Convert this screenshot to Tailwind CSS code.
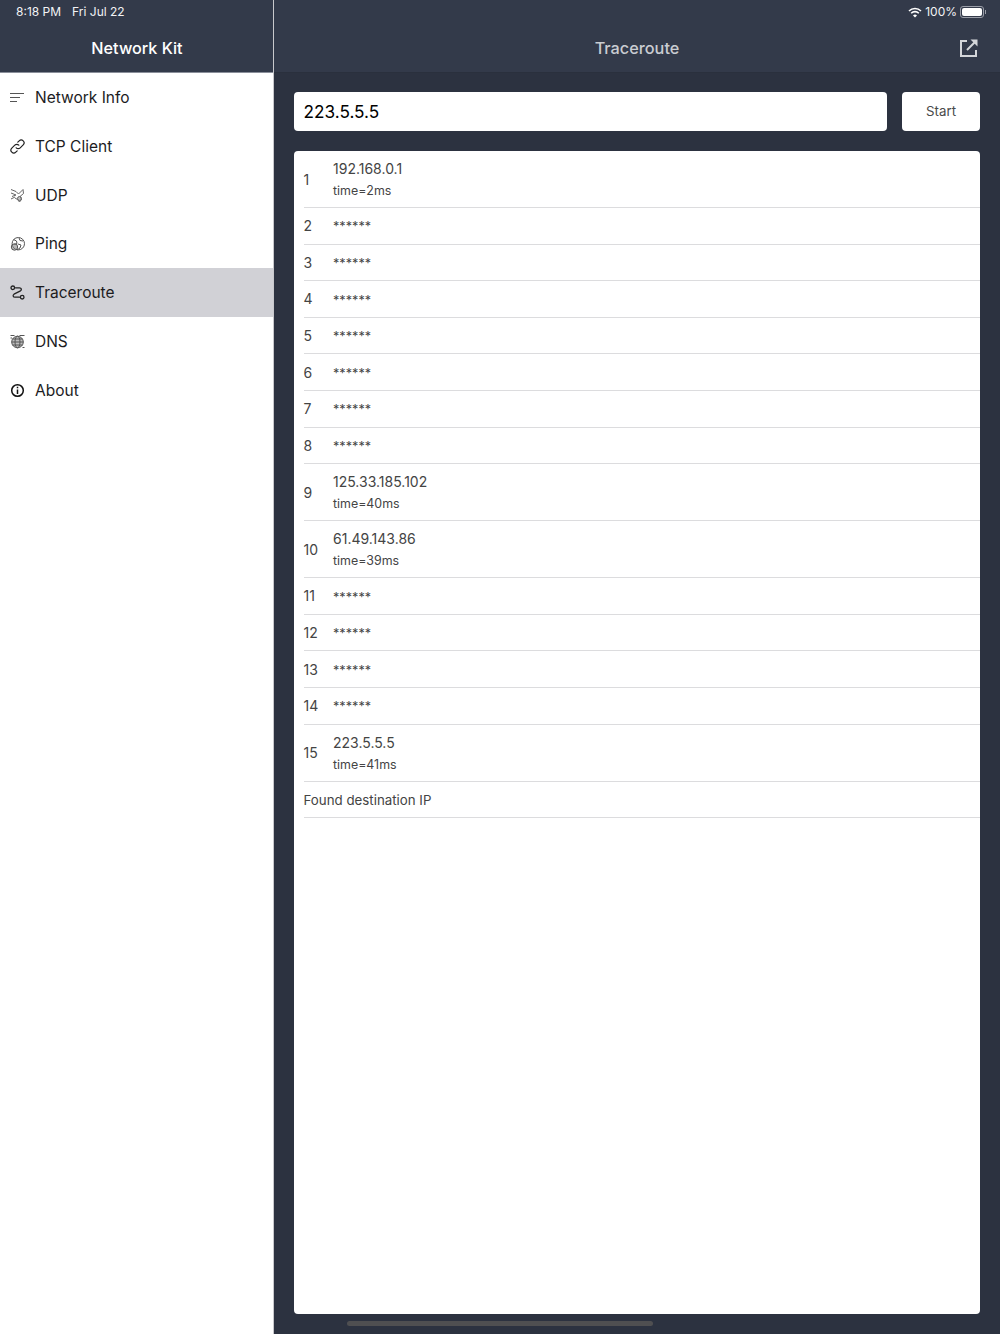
<!DOCTYPE html>
<html lang="en">
<head>
  <meta charset="UTF-8" />
  <title>Network Kit</title>
  <script src="https://cdn.jsdelivr.net/npm/@tailwindcss/browser@4"></script>
</head>
<body class="bg-[#2c3240] font-['Inter',sans-serif] text-[#3c3c3c]">
  <div class="flex h-[1334px] w-[1000px] overflow-hidden relative">

    <!-- Sidebar -->
    <aside class="w-[274px] shrink-0 bg-white border-r border-[#c8c8cc] flex flex-col">
      <header class="h-[73px] bg-[#333a4a] border-b border-[#8a8f9a] flex flex-col text-white">
        <div class="h-6 pl-4 flex items-center gap-[11px] text-[12px] leading-none text-[#f2f3f5]">
          <span>8:18 PM</span><span>Fri Jul 22</span>
        </div>
        <h1 class="mt-[6px] pl-px text-center text-[16.2px] leading-[36px] font-medium">Network Kit</h1>
      </header>
      <nav class="flex flex-col text-[#1c1c1e] text-[15.5px]">
        <a class="h-[49px] flex items-center gap-[10px] pl-[10px]">
          <svg class="w-[15px] h-[15px]" viewBox="0 0 15 15" fill="none" stroke="#555" stroke-width="1"><path d="M0 3.5h14M0 7.5h10M0 11.5h7"/></svg>
          <span>Network Info</span>
        </a>
        <a class="h-[49px] flex items-center gap-[10px] pl-[10px]">
          <svg class="w-[15px] h-[15px]" viewBox="0 0 15 15" fill="none" stroke="#222" stroke-width="1.2" stroke-linecap="round" stroke-linejoin="round"><path d="M6.2 8.8a2.8 2.8 0 0 0 4 0l3-3a2.8 2.8 0 0 0-4-4L7.8 3.2"/><path d="M8.8 6.2a2.8 2.8 0 0 0-4 0l-3 3a2.8 2.8 0 0 0 4 4l1.4-1.4"/></svg>
          <span>TCP Client</span>
        </a>
        <a class="h-[49px] flex items-center gap-[10px] pl-[10px]">
          <svg class="w-[15px] h-[15px]" viewBox="0 0 15 15" fill="none" stroke="#666" stroke-width="1"><path d="M1 1.5l5 2 2.5 2.5L13 1.5l.5 4L10 8.5l1.5 3-2 2.5-2-2.5L5 10"/><path d="M1 5l5 2M2 8.5l4-1.5M1 11l4-2"/><circle cx="9.500" cy="10.500" r="2" fill="#999" fill-opacity=".6"/></svg>
          <span>UDP</span>
        </a>
        <a class="h-[48px] flex items-center gap-[10px] pl-[10px]">
          <svg class="w-[15px] h-[15px]" viewBox="0 0 15 15" fill="none" stroke="#555" stroke-width="1"><circle cx="8.300" cy="6.700" r="6.200"/><path d="M3.500 2.500l3 1.500 .5 2.500-3 1M9 1l1 2.500 3 .5M8 7l3 1-1 3-3 2"/><circle cx="4.500" cy="10" r="3.200" fill="#888" fill-opacity=".6"/></svg>
          <span>Ping</span>
        </a>
        <a class="h-[49px] flex items-center gap-[10px] pl-[10px] bg-[#d1d1d6]">
          <svg class="w-[15px] h-[15px]" viewBox="0 0 15 15" fill="none" stroke="#222" stroke-width="1.300" stroke-linecap="round" stroke-linejoin="round"><circle cx="2.800" cy="2.800" r="1.800"/><circle cx="12.200" cy="12.200" r="1.800"/><path d="M5.500 2.800h4c2 0 2.500 2 1 3L4 9.200c-1.500 1-1 3 1 3h4.500"/></svg>
          <span>Traceroute</span>
        </a>
        <a class="h-[49px] flex items-center gap-[10px] pl-[10px]">
          <svg class="w-[15px] h-[15px]" viewBox="0 0 15 15" fill="none" stroke="#555" stroke-width="1"><circle cx="7.500" cy="8" r="5.800" fill="#888" fill-opacity=".55"/><ellipse cx="7.500" cy="8" rx="2.500" ry="5.800"/><path d="M1.700 8h11.600M2.500 5h10M2.500 11h10M.5 1.500h4M9.500 1.500h5M.5 4h1.500M12.500 13.500h2"/></svg>
          <span>DNS</span>
        </a>
        <a class="h-[49px] flex items-center gap-[10px] pl-[10px]">
          <svg class="w-[15px] h-[15px]" viewBox="0 0 15 15" fill="none" stroke="#111" stroke-width="1.500"><circle cx="7.500" cy="7.500" r="5.800"/><path d="M7.500 6.500v4.500M7.500 3.800v1.400"/></svg>
          <span>About</span>
        </a>
      </nav>
    </aside>

    <!-- Main -->
    <main class="flex-1 min-w-0 flex flex-col">
      <header class="h-[73px] bg-[#333a4a] border-b border-[#2a303d] flex flex-col">
        <div class="h-6 flex items-center justify-end pr-[14px] gap-[3px] text-[12px] leading-none text-[#f2f3f5]">
          <svg class="w-[14px] h-[11px]" viewBox="0 0 14 11" fill="none" stroke="#fff" stroke-width="1.600"><path d="M1 4a8.500 8.500 0 0 1 12 0M3.200 6.200a5.400 5.400 0 0 1 7.600 0"/><path d="M7 10.500L5 8.400a2.800 2.800 0 0 1 4 0z" fill="#fff" stroke="none"/></svg>
          <span>100%</span>
          <span class="flex items-center gap-px">
            <span class="w-[24px] h-[12px] rounded-[3px] border border-[#9a9ea8] p-px flex"><span class="flex-1 bg-white rounded-[2px]"></span></span>
            <span class="w-px h-1 bg-[#9a9ea8]"></span>
          </span>
        </div>
        <div class="relative mt-[6px] h-9 flex items-center justify-center">
          <h2 class="text-[16.300px] font-medium text-[#c9ccd2]">Traceroute</h2>
          <svg class="absolute right-[21px] top-[8px] w-[20px] h-[20px]" viewBox="0 0 20 20" fill="none" stroke="#d4d6da" stroke-width="2"><path d="M8 3H2v15h15v-6"/><path d="M8 12L15.500 4.500"/><path d="M11.500 1.500h7v7z" fill="#d4d6da" stroke="none"/></svg>
        </div>
      </header>

      <div class="flex-1 min-h-0 pt-[19px] pl-[19.500px] pr-[20px] pb-[20px] flex flex-col">
        <div class="flex gap-[15px] h-[39px]">
          <div class="flex-1 bg-white rounded-[4px] pl-[10px] pt-px flex items-center text-[17.200px] font-normal text-black">223.5.5.5</div>
          <button class="w-[78px] bg-white rounded-[4px] pt-px text-[13.300px] text-[#4a4a4a]">Start</button>
        </div>
        <div id="hops" class="mt-[20px] flex-1 bg-white rounded-[4px] text-[14px] text-[#444]"></div>
      </div>

      <div class="absolute left-[347px] top-[1321px] w-[306px] h-[5px] rounded-full bg-[#4f4f51]"></div>
    </main>
  </div>

  <script>
    const hops = [
      { n: 1, ip: "192.168.0.1", time: "2ms" }, { n: 2 }, { n: 3 }, { n: 4 }, { n: 5 }, { n: 6 }, { n: 7 }, { n: 8 },
      { n: 9, ip: "125.33.185.102", time: "40ms" }, { n: 10, ip: "61.49.143.86", time: "39ms" },
      { n: 11 }, { n: 12 }, { n: 13 }, { n: 14 }, { n: 15, ip: "223.5.5.5", time: "41ms" }
    ];
    const list = document.getElementById('hops');

    // rows with an ip are two lines, timeouts are just stars
    list.innerHTML = hops.map(h => h.ip ? `
      <div class="h-[57px] ml-[10px] flex items-center border-b border-[#dcdcde]">
        <span class="w-[29.500px] shrink-0">${h.n}</span>
        <div class="flex flex-col">
          <span class="leading-[21px]">${h.ip}</span>
          <span class="text-[12.400px] leading-[21px] translate-y-px">time=${h.time}</span>
        </div>
      </div>` : `
      <div class="h-[36.600px] ml-[10px] flex items-center border-b border-[#dcdcde]">
        <span class="w-[29.500px] shrink-0">${h.n}</span>
        <span class="text-[12.700px] leading-none translate-y-[2px]">******</span>
      </div>`).join('') + `
      <div class="h-[36.600px] ml-[10px] flex items-center border-b border-[#dcdcde] text-[13.300px]"><span class="translate-y-[1.5px]">Found destination IP</span></div>`;
  </script>
</body>
</html>
